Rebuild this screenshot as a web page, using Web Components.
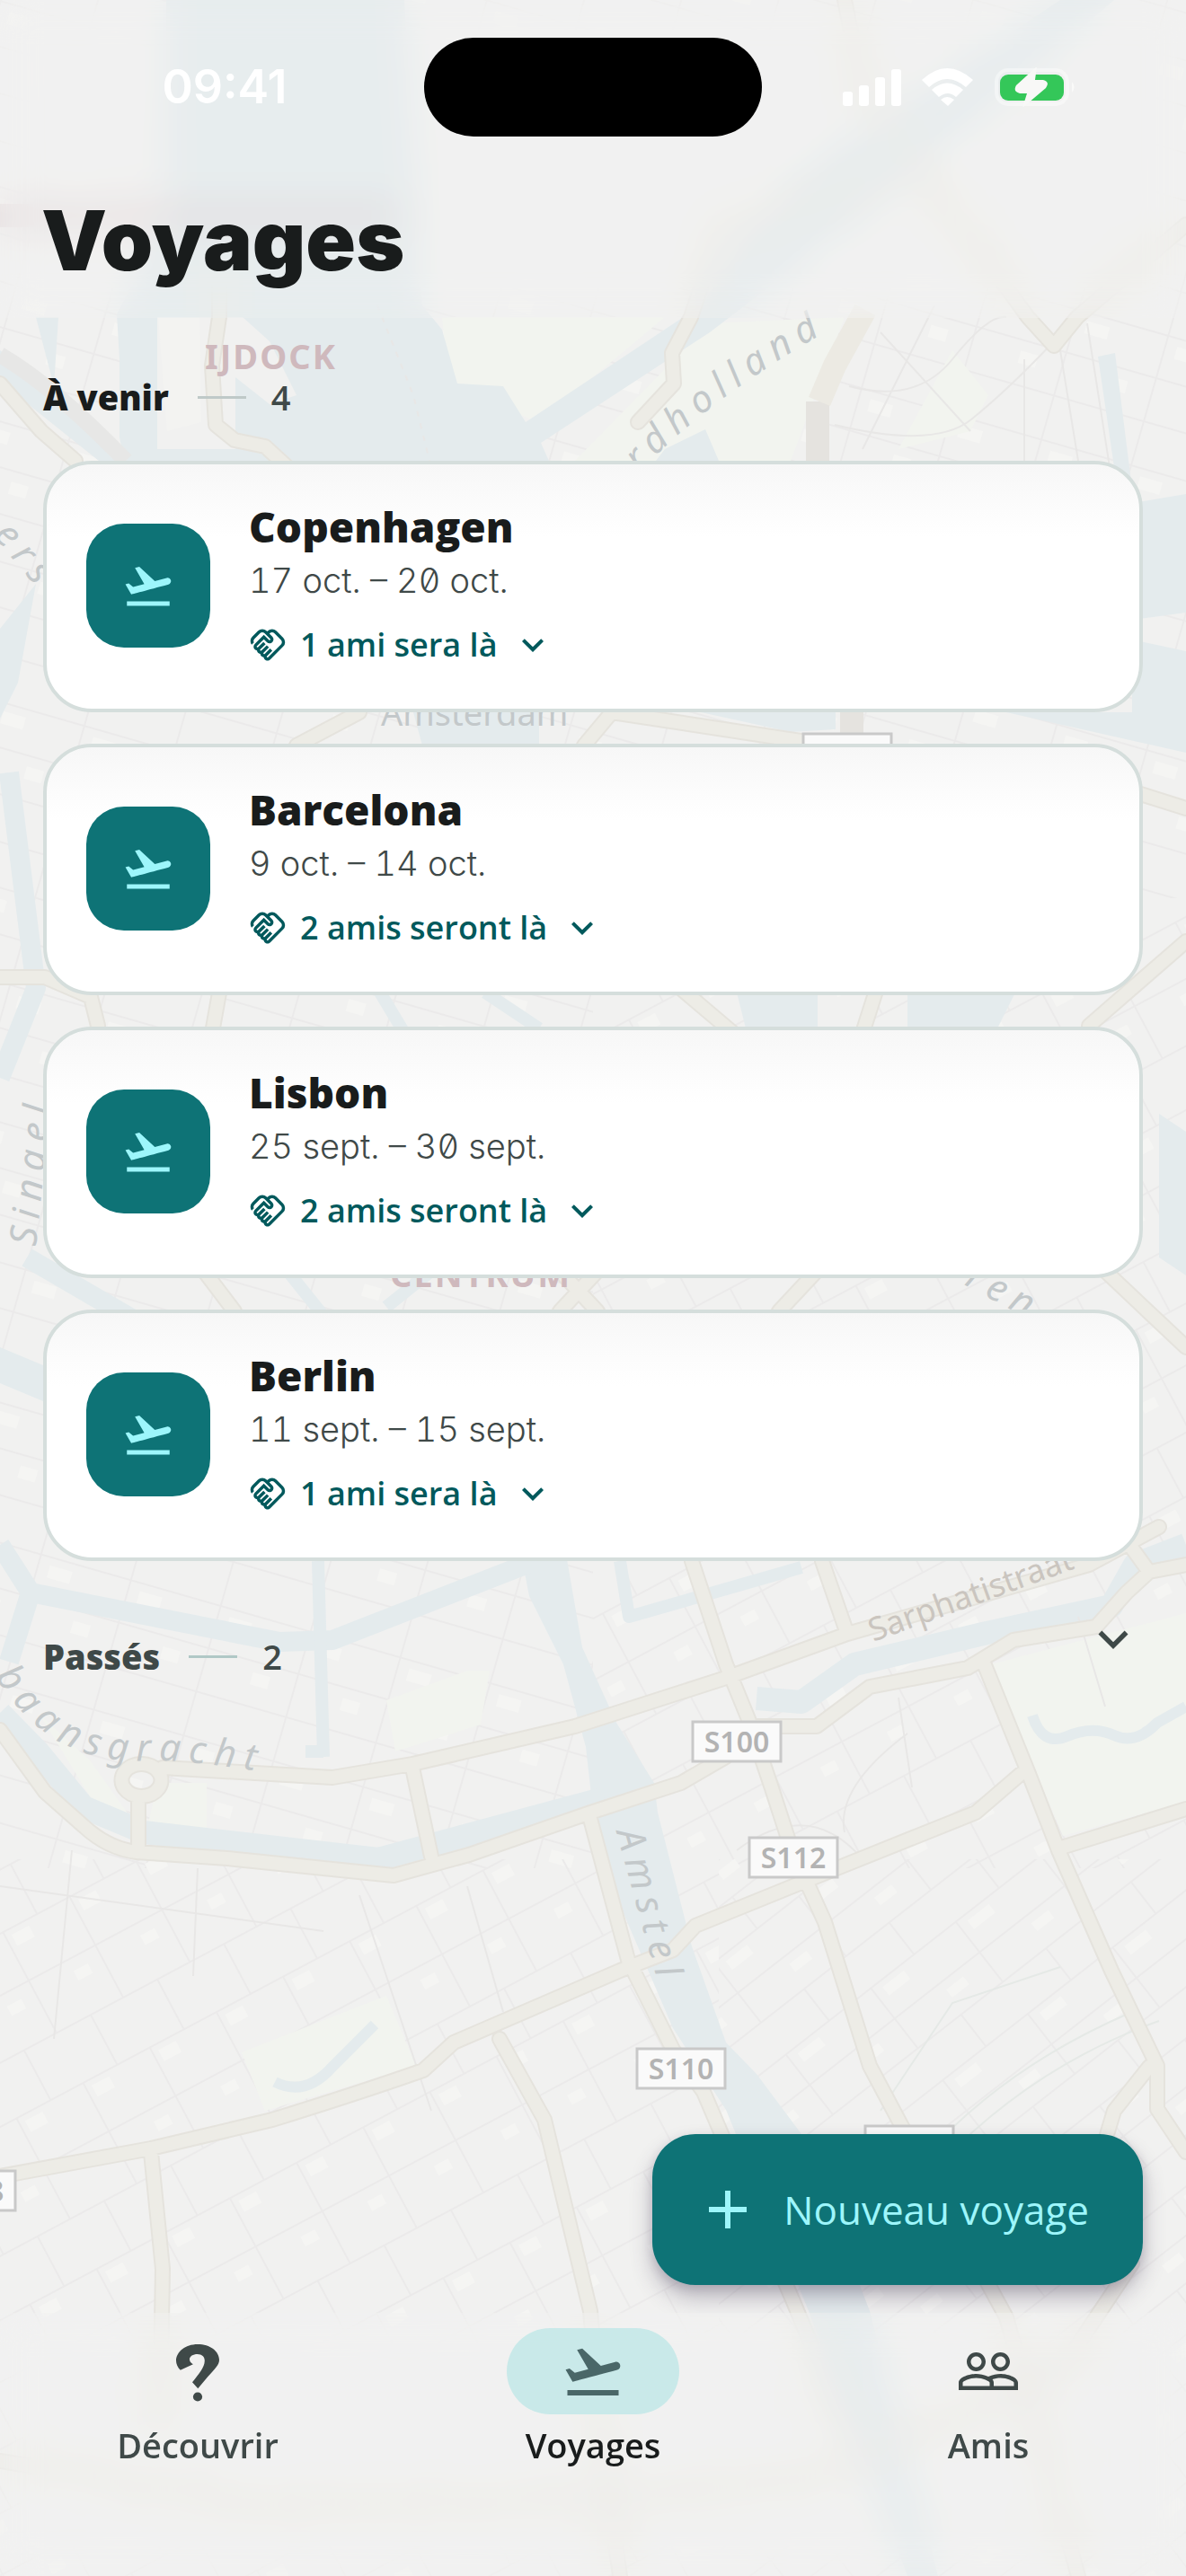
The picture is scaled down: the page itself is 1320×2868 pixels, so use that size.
<!DOCTYPE html>
<html lang="fr">
<head>
<meta charset="utf-8">
<meta name="viewport" content="width=device-width, initial-scale=1">
<title>Voyages</title>
<style>
  html, body { margin: 0; }
  body {
    font-family: "Open Sans", "Noto Sans", sans-serif;
    color: #191c1c;
    background: #f1f1f0;
    --teal: #0e7376;
    --teal-dark: #00595c;
    --aqua: #9df6fb;
    --muted: #3f4948;
  }
</style>
</head>
<body>
<travel-app>
  <city-map slot="map"></city-map>
  <status-bar slot="top" time="09:41"></status-bar>
  <span slot="title">Voyages</span>
  <trip-section label="À venir" count="4">
    <trip-card city="Copenhagen" dates="17 oct. – 20 oct.">1 ami sera là</trip-card>
    <trip-card city="Barcelona" dates="9 oct. – 14 oct.">2 amis seront là</trip-card>
    <trip-card city="Lisbon" dates="25 sept. – 30 sept.">2 amis seront là</trip-card>
    <trip-card city="Berlin" dates="11 sept. – 15 sept.">1 ami sera là</trip-card>
  </trip-section>
  <trip-section label="Passés" count="2" collapsed></trip-section>
  <new-trip-button slot="action">Nouveau voyage</new-trip-button>
  <tab-bar slot="nav">
    <tab-item icon="question" href="#decouvrir">Découvrir</tab-item>
    <tab-item icon="takeoff" href="#voyages" active>Voyages</tab-item>
    <tab-item icon="people" href="#amis">Amis</tab-item>
  </tab-bar>
</travel-app>

<script>
const icons = {
  takeoff: '<path d="M2.5 19h19v2h-19v-2zm19.57-9.36c-.21-.8-1.04-1.28-1.84-1.06L14.92 10l-6.9-6.43-1.93.51 4.14 7.17-4.97 1.33-1.97-1.54-1.45.39 2.59 4.49s7.12-1.9 16.57-4.43c.81-.23 1.28-1.05 1.07-1.85z"/>',
  people: '<path d="M16.5 13c-1.2 0-3.07.34-4.5 1-1.43-.67-3.3-1-4.5-1C5.33 13 1 14.08 1 16.25V19h22v-2.75c0-2.17-4.33-3.25-6.5-3.25zm-4 4.5h-10v-1.25c0-.54 2.56-1.75 5-1.75s5 1.21 5 1.75v1.25zm9 0H14v-1.25c0-.46-.2-.86-.52-1.22.88-.3 1.96-.53 3.02-.53 2.44 0 5 1.21 5 1.75v1.25zM7.5 12c1.93 0 3.5-1.57 3.5-3.5S9.43 5 7.5 5 4 6.57 4 8.5 5.57 12 7.5 12zm0-5.5c1.1 0 2 .9 2 2s-.9 2-2 2-2-.9-2-2 .9-2 2-2zm9 5.5c1.93 0 3.5-1.57 3.5-3.5S18.43 5 16.5 5 13 6.57 13 8.5s1.57 3.5 3.5 3.5zm0-5.5c1.1 0 2 .9 2 2s-.9 2-2 2-2-.9-2-2 .9-2 2-2z"/>',
  handshake: '<path d="M12.22 19.85c-.18.18-.5.21-.71 0a.504.504 0 0 1 0-.71l3.39-3.39-1.41-1.41-3.39 3.39c-.19.2-.51.19-.71 0a.504.504 0 0 1 0-.71l3.39-3.39-1.41-1.41-3.39 3.39c-.18.18-.5.21-.71 0a.513.513 0 0 1 0-.71l3.39-3.39-1.42-1.41-3.39 3.39c-.18.18-.5.21-.71 0a.513.513 0 0 1 0-.71L9.52 8.4l1.87 1.86c.95.95 2.59.94 3.54 0 .98-.98.98-2.56 0-3.54l-1.86-1.86.28-.28c.78-.78 2.05-.78 2.83 0l4.24 4.24c.78.78.78 2.05 0 2.83l-8.2 8.2zm9.61-6.78a4.008 4.008 0 0 0 0-5.66l-4.24-4.24a4.008 4.008 0 0 0-5.66 0l-.28.28-.28-.28a4.008 4.008 0 0 0-5.66 0L2.17 6.71a3.992 3.992 0 0 0-.4 5.19l1.45-1.45a2 2 0 0 1 .37-2.33l3.54-3.54c.78-.78 2.05-.78 2.83 0l3.56 3.56c.18.18.21.5 0 .71-.21.21-.53.18-.71 0L9.52 5.57l-5.8 5.79c-.98.97-.98 2.56 0 3.54.39.39.89.63 1.42.7a2.458 2.458 0 0 0 2.12 2.12 2.458 2.458 0 0 0 2.12 2.12c.07.54.31 1.03.7 1.42.47.47 1.1.73 1.77.73.67 0 1.3-.26 1.77-.73l8.21-8.19z"/>',
  chevron: '<path d="M7.41 8.59 12 13.17l4.59-4.58L18 10l-6 6-6-6z"/>',
  plus: '<path d="M11 5h2v6h6v2h-6v6h-2v-6H5v-2h6z"/>',
  question: '<path d="M12 2C7.4 2 4 4.900 4 8.100c0 1.200.6 2.600 1.600 3.500l4.700-2.200C9.400 9 9 8.300 9 7.600 9 6.500 10.300 5.700 11.900 5.700c1.700 0 2.700 1 2.700 2.400 0 2.600-2.400 5.200-4.600 8l2.100 2.300 3.700-4.400C18.400 11.200 20 9.500 20 7.800 20 4.600 16.600 2 12 2z"/><circle cx="12" cy="21.500" r="1.700"/>',
};

const icon = (name) => `<svg viewBox="0 0 24 24" fill="currentColor" aria-hidden="true">${icons[name]}</svg>`;

class TravelApp extends HTMLElement {
  constructor() {
    super();
    this.attachShadow({ mode: 'open' }).innerHTML = `
    <style>
      :host {
        position: relative;
        display: flex;
        flex-direction: column;
        min-height: 100vh;
        overflow: hidden;
      }
      .map {
        position: absolute;
        inset: 0;
      }
      header, main, .action, .nav { position: relative; }
      header {
        box-sizing: border-box;
        height: 354px;
        background: rgba(244, 244, 243, .2);
        backdrop-filter: blur(20px);
      }
      h1 {
        margin: 0;
        padding: 64px 46px 0;
        font: 900 92px/104px Inter, sans-serif;
      }
      main {
        flex: 1;
        padding: 52px 48px 0;
        display: flex;
        flex-direction: column;
        gap: 70px;
      }
      .action {
        display: flex;
        justify-content: flex-end;
        padding: 0 48px 31px;
      }
      .nav { backdrop-filter: blur(20px); background: rgba(244, 244, 243, .2); }
    </style>
    <div class="map"><slot name="map"></slot></div>
    <header>
      <slot name="top"></slot>
      <h1><slot name="title"></slot></h1>
    </header>
    <main><slot></slot></main>
    <div class="action"><slot name="action"></slot></div>
    <div class="nav"><slot name="nav"></slot></div>
    `;
  }
}

class StatusBar extends HTMLElement {
  connectedCallback() {
    this.attachShadow({ mode: 'open' }).innerHTML = `
    <style>
      :host {
        display: grid;
        grid-template-columns: 1fr 376px 1fr;
        align-items: center;
        padding-top: 42px;
        color: #fff;
      }
      time {
        font: 600 52px/64px Inter, sans-serif;
        text-align: center;
        padding-left: 28px;
      }
      .island {
        height: 110px;
        border-radius: 55px;
        background: #000;
      }
      .signs {
        display: flex;
        justify-content: center;
        align-items: center;
        padding-right: 30px;
      }
      svg { width: 264px; height: 44px; }
    </style>
    <time>${this.getAttribute('time')}</time>
    <div class="island"></div>
    <div class="signs">
      <svg viewBox="0 0 264 44" fill="#fff" aria-hidden="true">
        <rect x="1" y="27" width="11" height="16" rx="3"/>
        <rect x="19" y="20" width="11" height="23" rx="3"/>
        <rect x="37" y="11" width="11" height="32" rx="3"/>
        <rect x="55" y="2" width="11" height="41" rx="3"/>
        <path d="M89 14q28-26 57 0l-8 8q-21-18-41 0z"/>
        <path d="M100 25q17-15 35 0l-8 8q-9-8-19 0z"/>
        <path d="M110 36q7-6 15 0l-7 7z"/>
        <rect x="172" y="3" width="79" height="38" rx="13" fill="none" stroke="#fff" stroke-opacity=".4" stroke-width="4"/>
        <path d="M256 16q5 6 0 12z" fill-opacity=".6"/>
        <rect x="176" y="8" width="71" height="29" rx="9" fill="#34c759"/>
        <path d="M217-1 194 20q-4 7 4 9h8l-5 16 26-22q5-7-3-9h-9z" fill="#f8f8f7"/>
      </svg>
    </div>
    `;
  }
}

class TripSection extends HTMLElement {
  connectedCallback() {
    const collapsed = this.hasAttribute('collapsed');
    const heading = `
      <span class="label">${this.getAttribute('label')}</span>
      <span class="rule"></span>
      <span class="count">${this.getAttribute('count')}</span>`;
    this.attachShadow({ mode: 'open' }).innerHTML = `
    <style>
      :host { display: block; }
      h2 {
        margin: 0;
        font-size: 38px;
        line-height: 72px;
      }
      .row {
        display: flex;
        align-items: center;
        gap: 28px;
        width: 100%;
      }
      button.row {
        padding: 0;
        border: 0;
        background: none;
        font: inherit;
        color: var(--muted);
        text-align: left;
      }
      .label { font-weight: 800; }
      .rule {
        width: 54px;
        height: 3px;
        margin-left: 4px;
        background: #bfc9c8;
      }
      button .rule { background: #b0c8c6; }
      .count { font-weight: 600; color: var(--muted); }
      svg {
        width: 66px;
        height: 66px;
        margin-left: auto;
        align-self: flex-start;
        margin-top: -16px;
      }
      .list {
        display: flex;
        flex-direction: column;
        gap: 35px;
        padding-top: 35px;
      }
    </style>
    ${collapsed
      ? `<h2><button class="row" type="button" aria-expanded="false">${heading}${icon('chevron')}</button></h2>`
      : `<h2 class="row">${heading}</h2><div class="list"><slot></slot></div>`}
    `;
  }
}

class TripCard extends HTMLElement {
  connectedCallback() {
    this.attachShadow({ mode: 'open' }).innerHTML = `
    <style>
      :host {
        display: flex;
        align-items: center;
        gap: 43px;
        padding: 41px 44px 43px;
        border: 4px solid #d5dedc;
        border-radius: 54px;
        background: linear-gradient(#f7f7f7, #fff 30%) padding-box, #fff;
      }
      .badge {
        flex: none;
        display: grid;
        place-items: center;
        width: 138px;
        height: 138px;
        border-radius: 42px;
        background: var(--teal);
        color: var(--aqua);
      }
      .badge svg { width: 60px; height: 60px; }
      .info { display: grid; justify-items: start; }
      h3 {
        margin: 0 0 4px;
        font-size: 46px;
        font-weight: 800;
        line-height: 56px;
      }
      p {
        margin: 0 0 16px;
        font: 300 38px/56px Inter, sans-serif;
        font-feature-settings: "zero", "tnum";
        color: var(--muted);
      }
      button {
        display: flex;
        align-items: center;
        gap: 15px;
        padding: 0;
        border: 0;
        background: none;
        font: 600 36px/56px "Open Sans", sans-serif;
        color: var(--teal-dark);
      }
      button svg { width: 42px; height: 42px; }
      button svg:last-child { width: 48px; height: 48px; }
    </style>
    <div class="badge">${icon('takeoff')}</div>
    <div class="info">
      <h3>${this.getAttribute('city')}</h3>
      <p>${this.getAttribute('dates')}</p>
      <button type="button" aria-expanded="false">${icon('handshake')}<slot></slot>${icon('chevron')}</button>
    </div>
    `;
  }
}

class NewTripButton extends HTMLElement {
  constructor() {
    super();
    this.attachShadow({ mode: 'open' }).innerHTML = `
    <style>
      :host { display: block; }
      button {
        display: flex;
        align-items: center;
        gap: 26px;
        height: 168px;
        padding: 0 60px 0 48px;
        border: 0;
        border-radius: 48px;
        background: var(--teal);
        box-shadow: 0 14px 24px rgba(60, 50, 80, .3), 0 4px 12px rgba(60, 50, 80, .16);
        color: var(--aqua);
        font: 500 44px/56px "Open Sans", sans-serif;
      }
      svg { width: 72px; height: 72px; }
    </style>
    <button type="button">${icon('plus')}<slot></slot></button>
    `;
  }
}

class TabBar extends HTMLElement {
  constructor() {
    super();
    this.attachShadow({ mode: 'open' }).innerHTML = `
    <style>
      :host { display: block; }
      nav {
        display: grid;
        grid-template-columns: repeat(3, 1fr);
        padding: 17px 0 122px;
      }
    </style>
    <nav><slot></slot></nav>
    `;
  }
}

class TabItem extends HTMLElement {
  connectedCallback() {
    const active = this.hasAttribute('active');
    this.attachShadow({ mode: 'open' }).innerHTML = `
    <style>
      :host { display: block; }
      a {
        display: flex;
        flex-direction: column;
        align-items: center;
        gap: 10px;
        font-size: 38px;
        font-weight: 600;
        line-height: 48px;
        color: var(--muted);
        text-decoration: none;
      }
      .pill {
        display: grid;
        place-items: center;
        width: 192px;
        height: 96px;
        border-radius: 48px;
      }
      .active { color: #191c1c; }
      .active .pill { background: #c9e9e9; color: #4a6768; }
      svg { width: 72px; height: 72px; }
    </style>
    <a href="${this.getAttribute('href')}" ${active ? 'class="active" aria-current="page"' : ''}>
      <span class="pill">${icon(this.getAttribute('icon'))}</span>
      <slot></slot>
    </a>
    `;
  }
}

class CityMap extends HTMLElement {
  constructor() {
    super();
    // road number plates: centre x, top y, text
    const plates = [
      [820, 1917, 'S100'], [883, 2046, 'S112'], [758, 2281, 'S110'],
      [943, 817, 'S100'], [1012, 2367, 'S111'], [-32, 2417, 'S108'],
    ].map(([x, y, text]) => `
      <rect x="${x - 49}" y="${y}" width="98" height="44" fill="#fafafa" stroke="#c9c9c9" stroke-width="3"/>
      <text class="plate" x="${x}" y="${y + 34}">${text}</text>`).join('');

    this.attachShadow({ mode: 'open' }).innerHTML = `
    <style>
      :host { display: block; height: 100%; }
      svg { display: block; width: 100%; height: 100%; }
      .water { fill: #e4ebed; }
      .canal { fill: none; stroke: #e4ebed; stroke-linejoin: round; }
      .park { fill: #f2f4ef; }
      .roads use:first-child { stroke: #e5e3dd; stroke-width: 18; }
      .roads use:last-child { stroke: #edece6; stroke-width: 14; }
      .streets { fill: none; stroke: #e8e7e6; stroke-width: 2; }
      text { font-family: "Noto Sans", sans-serif; font-size: 38px; fill: #c3c8ca; }
      .river { font-size: 42px; font-style: italic; letter-spacing: 9px; }
      .area { font-weight: 700; fill: #cfb9bd; letter-spacing: 2px; }
      .road-name { font-size: 36px; fill: #cac5bf; }
      .plate { font-size: 32px; font-weight: 600; text-anchor: middle; fill: #b3b3b3; }
    </style>
    <svg viewBox="0 0 1320 2868" preserveAspectRatio="xMidYMid slice" aria-hidden="true">
      <defs>
        <pattern id="blocks-a" width="84" height="190" patternUnits="userSpaceOnUse" patternTransform="rotate(-28)">
          <path d="M0 1H84M0 62H84M0 128H84M1 0V128M44 128V190" fill="none" stroke="#ebeaea" stroke-width="2"/>
          <path d="M8 8h22v14H8zM50 76h18v12H50z" fill="#f5f5f3"/>
        </pattern>
        <pattern id="blocks-b" width="120" height="130" patternUnits="userSpaceOnUse" patternTransform="rotate(-38)">
          <path d="M0 1H120M0 44H120M0 86H120M1 0V86M62 86V130" fill="none" stroke="#ebeaea" stroke-width="2"/>
          <path d="M12 8h30v12H12zM66 54h24v11H66z" fill="#f5f5f3"/>
        </pattern>
        <pattern id="blocks-c" width="104" height="150" patternUnits="userSpaceOnUse" patternTransform="rotate(16)">
          <path d="M0 1H104M0 50H104M0 100H104M1 0V150" fill="none" stroke="#ebeaea" stroke-width="2"/>
          <path d="M14 10h26v14H14zM56 62h20v14H56z" fill="#f5f5f3"/>
        </pattern>
        <path id="north" d="M712 526Q800 430 980 336"/>
        <path id="gracht" d="M-6 1866C46 1946 100 1964 180 1960Q240 1962 400 1990"/>
        <path id="amstel" d="M686 2040L766 2330"/>
        <path id="roads" fill="none" stroke-linejoin="round" stroke-linecap="round" d="
          M0 1926L50 1995 93 2033Q120 2058 152 2062L253 2069 438 2088 522 2065 657 2018 758 1985 808 1956
          M181 1968L370 1979 459 1964 640 1922 808 1868 943 1819 1212 1742 1290 1700
          M770 1738L808 1853 833 1914 859 1991 880 2056 918 2140 968 2300 1002 2364 1060 2470 1120 2580 1200 2868
          M842 1922H909L968 1878 1077 1857 1128 1826 1220 1811 1254 1773 1279 1750 1320 1742M1279 1750L1250 1710
          M915 1738L943 1819M459 1968L480 2067
          M157 1964a22 18 0 1 0 1 0M154 2000V2060
          M1320 2014L1178 2058M1094 1849L1145 1975 1178 2060 1237 2194 1288 2300 1288 2348 1320 2396M1279 2301L1240 2350 1225 2400
          M1136 1975L1086 2018 934 2079 774 2144 749 2171 690 2194 505 2274 471 2305Q400 2330 303 2360L168 2392 0 2423
          M657 2025L699 2182 749 2282 783 2329 884 2565 940 2700
          M556 2270L606 2360 657 2573 670 2720 690 2868
          M168 2396L181 2526 178 2700M0 2740L300 2790 700 2780 900 2760 1180 2640 1260 2520
          M0 427L46 480 84 513 M244 300V353L236 407 240 473 261 490 295 497 320 520
          M769 353L748 393 750 427 710 470M769 353L800 260 980 200
          M1144 353L1173 385 1199 353 1320 250M1144 353L960 100 940 0
          M681 793L891 825M681 793L650 830M400 793L330 830
          M1263 882L1320 900M1320 1048L1212 1142M0 1088L50 1088 101 1110 109 1142
          M245 1100L236 1150M757 1100L816 1150M976 1100L960 1150
          M227 1415L261 1460M665 1415L623 1460M623 1415L665 1460M909 1415L867 1460M1230 1415L1320 1500"/>
      </defs>

      <rect width="1320" height="2868" fill="#f1f1f0"/>
      <rect width="1320" height="1000" fill="url(#blocks-c)"/>
      <rect y="1000" width="660" height="1080" fill="url(#blocks-c)"/>
      <rect x="660" y="1000" width="660" height="1080" fill="url(#blocks-a)"/>
      <rect y="2070" width="800" height="798" fill="url(#blocks-a)"/>
      <rect x="800" y="2070" width="520" height="798" fill="url(#blocks-b)"/>

      <g class="park">
        <path d="M492 353L740 353 600 470 500 430zM640 513L790 360 940 353 880 513zM1000 500L1060 390 1100 440 1080 480z"/>
        <path d="M1103 1853L1320 1796V2006L1183 2044zM269 2285L430 2222 463 2300 295 2350z"/>
        <path d="M430 1893L520 1860 545 1860 535 1920 440 1950zM45 1910L100 1960 150 2030 100 2000zM175 1985L230 1985V2038L165 2030z"/>
      </g>

      <path class="water" d="M185 0H450L470 340 492 367 509 427 560 430 585 470 780 340 880 200 1180 0H1240L960 240 790 370 602 493 614 520H140L133 487V400L130 350 185 240z"/>
      <path d="M175 353H270L300 380 330 440 300 450 262 420V500H175z" fill="#f1f1f0"/>
      <path d="M176 353L222 353 224 470 186 480z" fill="#f3f3f1"/>
      <g class="water">
        <path d="M40 353L65 353 60 430zM0 390L150 513H110L0 425z"/>
        <path d="M1222 397L1241 393 1262 560 1320 550V682L1260 690 1240 520zM1260 712L1320 725V838L1120 793H1260z"/>
        <path d="M780 793H930V812L880 815zM820 1105H910V1145H830zM1010 1105H1130L1110 1145H1010zM740 500L785 478 800 513H730z"/>
        <path d="M460 793H600V830H470zM1290 1240L1320 1260V1420L1290 1400zM0 700L40 650 20 760 0 800zM0 1500L48 1520V1560L0 1540z"/>
        <path d="M581 1736H631L648 1834 686 1918 728 1985 732 2018 770 2167 808 2274 842 2309 892 2376 968 2573 1044 2868H1010L900 2573 808 2349 749 2258 690 2121 661 2025 652 1945 627 1853 589 1777z"/>
      </g>
      <g class="canal">
        <path stroke-width="26" d="M0 1907L42 1950 93 2012 160 2040 421 2070 673 2002M842 1891L892 1895 951 1853 1094 1819 1237 1788 1263 1742 1320 1720"/>
        <path stroke-width="22" d="M0 1720L34 1773 311 1828 370 1826 590 1740M10 860L40 1100 0 1200M30 1400L150 1470M34 1773L10 1850"/>
        <path stroke-width="14" d="M354 1738L360 1956M340 1950H360M690 1738L700 1800 892 1745M420 1100L450 1150M540 1105L600 1145M320 1415L360 1465M430 1455L480 1415"/>
        <path stroke-width="12" d="M1149 1910Q1160 1945 1188 1933T1240 1932 1288 1918L1320 1900M417 2254L370 2301Q340 2335 306 2318"/>
      </g>

      <g class="streets">
        <path d="M420 340L460 440 478 513" stroke-dasharray="6 8"/>
        <path d="M929 473Q1040 500 1081 467T1173 380M945 430Q1020 450 1060 400T1120 353M980 370L1080 480M1040 340L960 500M1140 400V513M1180 390L1200 513M1210 360L1235 520"/>
        <path d="M820 2060Q900 2000 960 2070M1010 1930Q930 1990 940 2040M0 2100L360 2150M80 2060L60 2270M220 2080L215 2200M400 2110L480 2350M520 2100L560 2240M1000 1890L1015 1990M1200 1800L1230 1900"/>
        <path d="M1030 2400Q1120 2300 1260 2240M1045 2410Q1150 2300 1290 2250M980 2350L1060 2230 1180 2190" stroke="#e5e9e6"/>
      </g>
      <path d="M910 447V513M948 793V817" fill="none" stroke="#e5e3df" stroke-width="26"/>
      <path d="M0 395Q60 430 140 513" fill="none" stroke="#e7e7e6" stroke-width="18"/>
      <path d="M963 345L929 407 912 447" fill="none" stroke="#eceae3" stroke-width="26"/>
      <g class="roads"><use href="#roads"/><use href="#roads"/></g>
      <path d="M0 240H440" fill="none" stroke="#d9c9cc" stroke-width="26" stroke-opacity=".5"/>

      <text class="area" x="228" y="411">IJDOCK</text>
      <text class="area" x="434" y="1433">CENTRUM</text>
      <text x="424" y="808">Amsterdam</text>
      <text class="river"><textPath href="#north">rdholland</textPath></text>
      <text class="river"><textPath href="#gracht">baansgracht</textPath></text>
      <text class="river"><textPath href="#amstel">Amstel</textPath></text>
      <text class="river" transform="translate(40 1388) rotate(-84)">Singel</text>
      <text class="river" transform="translate(-8 596) rotate(50)">ers</text>
      <text class="river" transform="translate(1046 1416) rotate(28)">eren</text>
      <text class="road-name" transform="translate(972 1828) rotate(-20)">Sarphatistraat</text>
      ${plates}
    </svg>
    `;
  }
}

customElements.define('travel-app', TravelApp);
customElements.define('status-bar', StatusBar);
customElements.define('trip-section', TripSection);
customElements.define('trip-card', TripCard);
customElements.define('new-trip-button', NewTripButton);
customElements.define('tab-bar', TabBar);
customElements.define('tab-item', TabItem);
customElements.define('city-map', CityMap);
</script>
</body>
</html>
